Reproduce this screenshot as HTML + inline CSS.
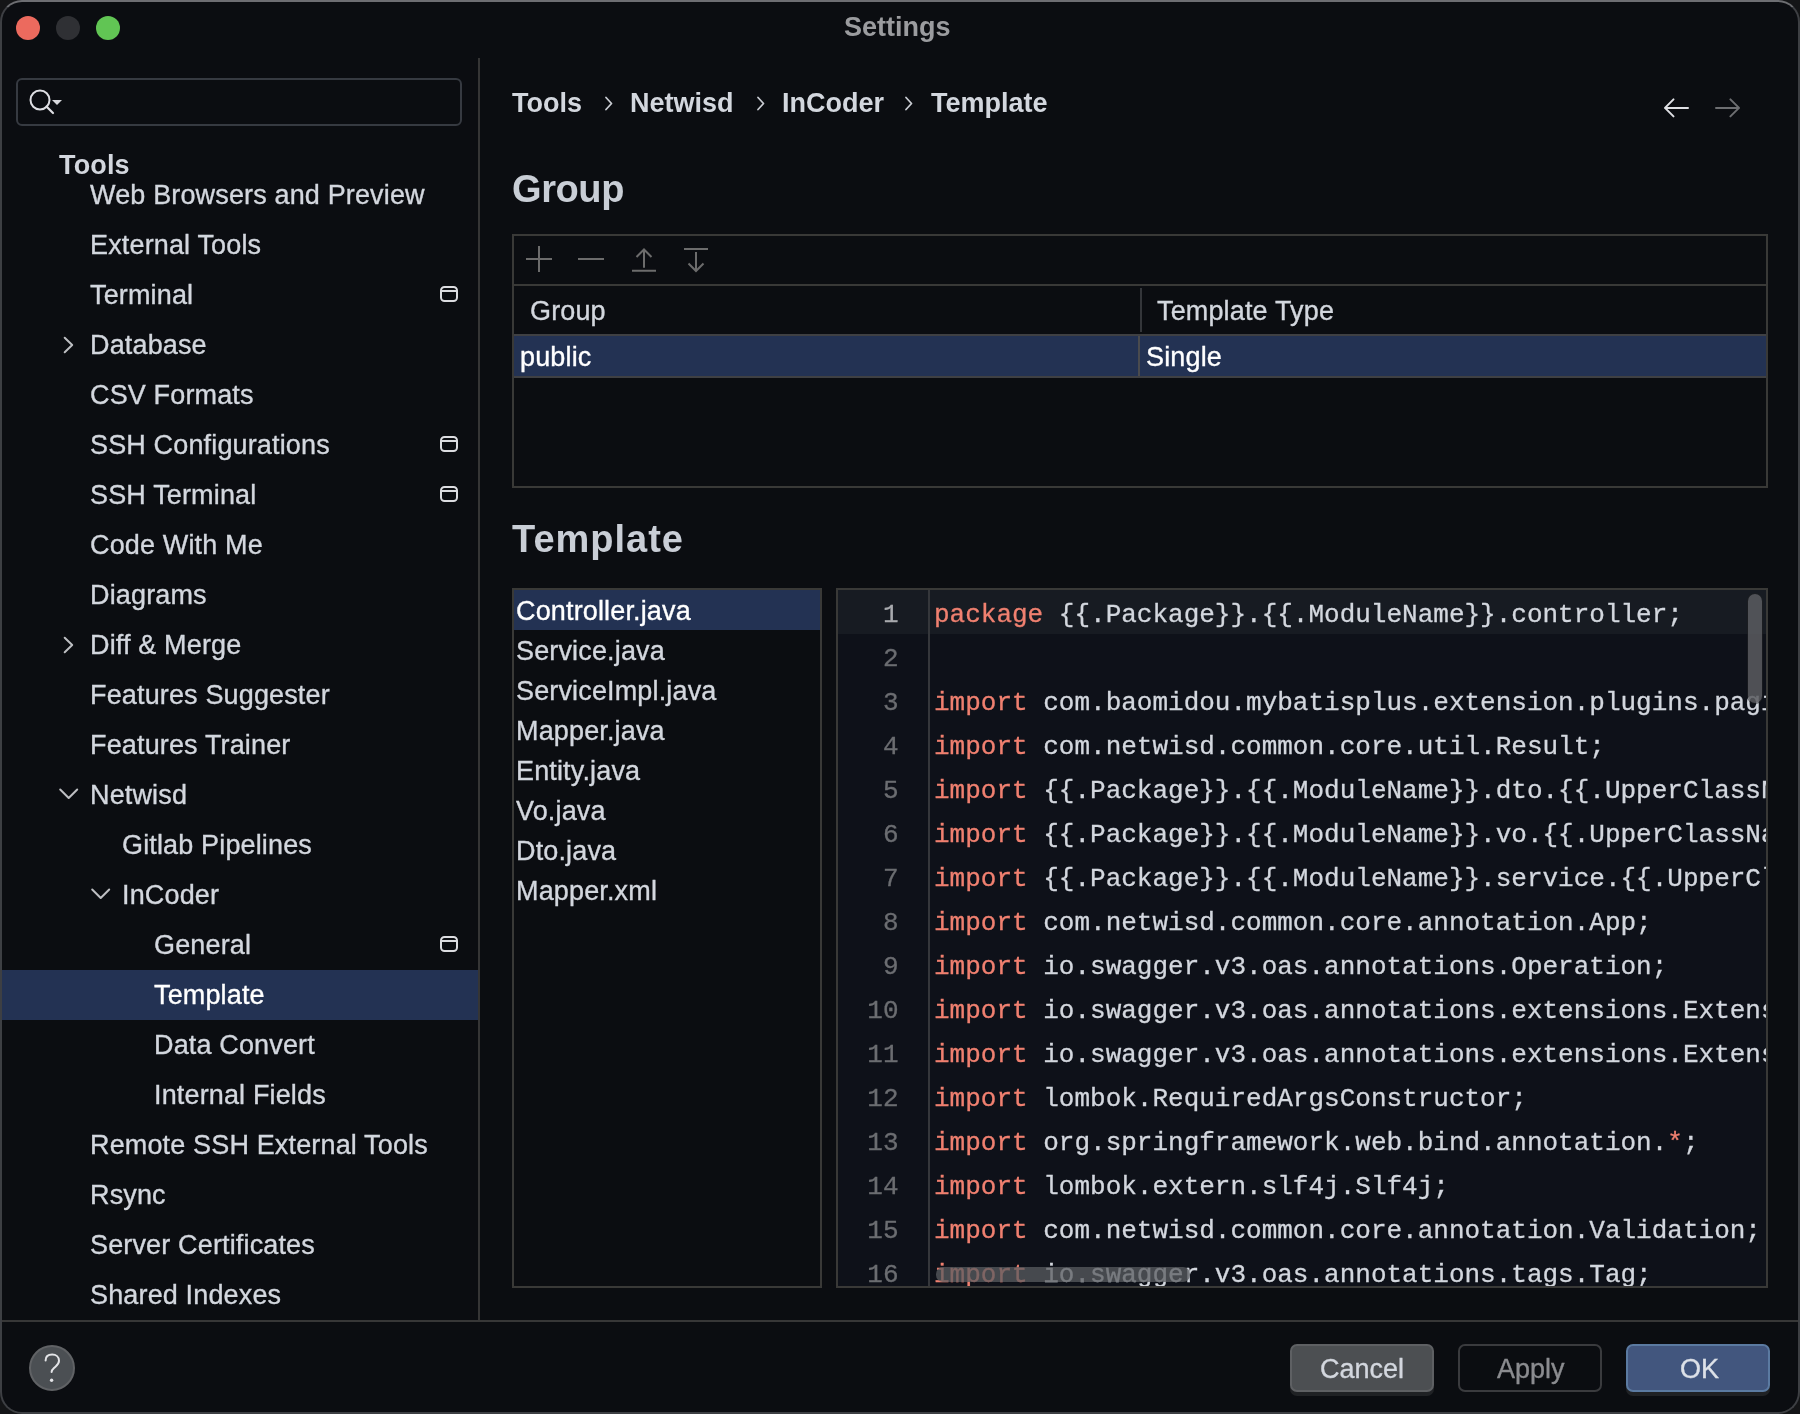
<!DOCTYPE html>
<html><head><meta charset="utf-8"><title>Settings</title>
<style>
html,body{margin:0;padding:0;width:1800px;height:1414px;overflow:hidden;background:#141517;}
.win{position:absolute;left:0;top:0;width:1800px;height:1414px;box-sizing:border-box;border-radius:22px;background:#0b0d11;border:2px solid #3d3f43;border-top-color:#6d6e72;overflow:hidden;}
.s{position:absolute;white-space:nowrap;will-change:transform;font-family:"Liberation Sans",sans-serif;letter-spacing:0.15px;}
.m{position:absolute;white-space:pre;will-change:transform;-webkit-text-stroke:0.3px currentColor;font-family:"Liberation Mono",monospace;font-size:26px;line-height:44px;}
.kw{color:#f08070;}
svg{position:absolute;overflow:visible;}
</style></head><body>
<div class="win"></div>

<div style="position:absolute;left:16px;top:16px;width:24px;height:24px;border-radius:50%;background:#ec6a5e;"></div>
<div style="position:absolute;left:56px;top:16px;width:24px;height:24px;border-radius:50%;background:#2f3034;"></div>
<div style="position:absolute;left:96px;top:16px;width:24px;height:24px;border-radius:50%;background:#61c554;"></div>
<div class="s" style="left:844px;top:14px;font-size:27px;line-height:27px;color:#9b9c9f;font-weight:bold;letter-spacing:0;">Settings</div>
<div style="position:absolute;left:478px;top:58px;width:2px;height:1263px;background:#353535;"></div>
<div style="position:absolute;left:2px;top:1320px;width:1796px;height:2px;background:#373737;"></div>
<div style="position:absolute;left:16px;top:78px;width:446px;height:48px;box-sizing:border-box;border:2px solid #363a41;border-radius:6px;"></div>
<svg style="left:0;top:0" width="1" height="1"><circle cx="40" cy="100" r="9.5" fill="none" stroke="#dedfe3" stroke-width="2"/><path d="M46.5 106.5 L53 113" stroke="#dedfe3" stroke-width="2.2" stroke-linecap="round"/><path d="M52 100 L62 100 L57 105 Z" fill="#d8d9dd"/></svg>
<div style="position:absolute;left:2px;top:970px;width:476px;height:50px;background:#233253;"></div>
<div class="s" style="left:59px;top:152px;font-size:27px;line-height:27px;color:#d3d7de;font-weight:bold;">Tools</div>
<div class="s" style="left:90px;top:182px;font-size:27px;line-height:27px;color:#d3d7de;-webkit-text-stroke:0.35px #d3d7de;">Web Browsers and Preview</div>
<div class="s" style="left:90px;top:232px;font-size:27px;line-height:27px;color:#d3d7de;-webkit-text-stroke:0.35px #d3d7de;">External Tools</div>
<div class="s" style="left:90px;top:282px;font-size:27px;line-height:27px;color:#d3d7de;-webkit-text-stroke:0.35px #d3d7de;">Terminal</div>
<svg style="left:0;top:0" width="1" height="1"><rect x="441" y="287" width="16" height="14" rx="3.5" fill="none" stroke="#dcdde1" stroke-width="2"/><path d="M441 291 L457 291" stroke="#dcdde1" stroke-width="2"/></svg>
<div class="s" style="left:90px;top:332px;font-size:27px;line-height:27px;color:#d3d7de;-webkit-text-stroke:0.35px #d3d7de;">Database</div>
<svg style="left:0;top:0" width="1" height="1"><path d="M64.7 337.8 L72.2 345 L64.7 352.2" fill="none" stroke="#bdbec2" stroke-width="2" stroke-linecap="round" stroke-linejoin="round"/></svg>
<div class="s" style="left:90px;top:382px;font-size:27px;line-height:27px;color:#d3d7de;-webkit-text-stroke:0.35px #d3d7de;">CSV Formats</div>
<div class="s" style="left:90px;top:432px;font-size:27px;line-height:27px;color:#d3d7de;-webkit-text-stroke:0.35px #d3d7de;">SSH Configurations</div>
<svg style="left:0;top:0" width="1" height="1"><rect x="441" y="437" width="16" height="14" rx="3.5" fill="none" stroke="#dcdde1" stroke-width="2"/><path d="M441 441 L457 441" stroke="#dcdde1" stroke-width="2"/></svg>
<div class="s" style="left:90px;top:482px;font-size:27px;line-height:27px;color:#d3d7de;-webkit-text-stroke:0.35px #d3d7de;">SSH Terminal</div>
<svg style="left:0;top:0" width="1" height="1"><rect x="441" y="487" width="16" height="14" rx="3.5" fill="none" stroke="#dcdde1" stroke-width="2"/><path d="M441 491 L457 491" stroke="#dcdde1" stroke-width="2"/></svg>
<div class="s" style="left:90px;top:532px;font-size:27px;line-height:27px;color:#d3d7de;-webkit-text-stroke:0.35px #d3d7de;">Code With Me</div>
<div class="s" style="left:90px;top:582px;font-size:27px;line-height:27px;color:#d3d7de;-webkit-text-stroke:0.35px #d3d7de;">Diagrams</div>
<div class="s" style="left:90px;top:632px;font-size:27px;line-height:27px;color:#d3d7de;-webkit-text-stroke:0.35px #d3d7de;">Diff &amp; Merge</div>
<svg style="left:0;top:0" width="1" height="1"><path d="M64.7 637.8 L72.2 645 L64.7 652.2" fill="none" stroke="#bdbec2" stroke-width="2" stroke-linecap="round" stroke-linejoin="round"/></svg>
<div class="s" style="left:90px;top:682px;font-size:27px;line-height:27px;color:#d3d7de;-webkit-text-stroke:0.35px #d3d7de;">Features Suggester</div>
<div class="s" style="left:90px;top:732px;font-size:27px;line-height:27px;color:#d3d7de;-webkit-text-stroke:0.35px #d3d7de;">Features Trainer</div>
<div class="s" style="left:90px;top:782px;font-size:27px;line-height:27px;color:#d3d7de;-webkit-text-stroke:0.35px #d3d7de;">Netwisd</div>
<svg style="left:0;top:0" width="1" height="1"><path d="M60.2 789.5 L68.7 798 L77.2 789.5" fill="none" stroke="#bdbec2" stroke-width="2" stroke-linecap="round" stroke-linejoin="round"/></svg>
<div class="s" style="left:122px;top:832px;font-size:27px;line-height:27px;color:#d3d7de;-webkit-text-stroke:0.35px #d3d7de;">Gitlab Pipelines</div>
<div class="s" style="left:122px;top:882px;font-size:27px;line-height:27px;color:#d3d7de;-webkit-text-stroke:0.35px #d3d7de;">InCoder</div>
<svg style="left:0;top:0" width="1" height="1"><path d="M92.2 889.5 L100.7 898 L109.2 889.5" fill="none" stroke="#bdbec2" stroke-width="2" stroke-linecap="round" stroke-linejoin="round"/></svg>
<div class="s" style="left:154px;top:932px;font-size:27px;line-height:27px;color:#d3d7de;-webkit-text-stroke:0.35px #d3d7de;">General</div>
<svg style="left:0;top:0" width="1" height="1"><rect x="441" y="937" width="16" height="14" rx="3.5" fill="none" stroke="#dcdde1" stroke-width="2"/><path d="M441 941 L457 941" stroke="#dcdde1" stroke-width="2"/></svg>
<div class="s" style="left:154px;top:982px;font-size:27px;line-height:27px;color:#ffffff;-webkit-text-stroke:0.35px #ffffff;">Template</div>
<div class="s" style="left:154px;top:1032px;font-size:27px;line-height:27px;color:#d3d7de;-webkit-text-stroke:0.35px #d3d7de;">Data Convert</div>
<div class="s" style="left:154px;top:1082px;font-size:27px;line-height:27px;color:#d3d7de;-webkit-text-stroke:0.35px #d3d7de;">Internal Fields</div>
<div class="s" style="left:90px;top:1132px;font-size:27px;line-height:27px;color:#d3d7de;-webkit-text-stroke:0.35px #d3d7de;">Remote SSH External Tools</div>
<div class="s" style="left:90px;top:1182px;font-size:27px;line-height:27px;color:#d3d7de;-webkit-text-stroke:0.35px #d3d7de;">Rsync</div>
<div class="s" style="left:90px;top:1232px;font-size:27px;line-height:27px;color:#d3d7de;-webkit-text-stroke:0.35px #d3d7de;">Server Certificates</div>
<div class="s" style="left:90px;top:1282px;font-size:27px;line-height:27px;color:#d3d7de;-webkit-text-stroke:0.35px #d3d7de;">Shared Indexes</div>
<div class="s" style="left:512px;top:90px;font-size:27px;line-height:27px;color:#d3d7de;font-weight:bold;letter-spacing:0;">Tools</div>
<div class="s" style="left:630px;top:90px;font-size:27px;line-height:27px;color:#d3d7de;font-weight:bold;letter-spacing:0;">Netwisd</div>
<div class="s" style="left:782px;top:90px;font-size:27px;line-height:27px;color:#d3d7de;font-weight:bold;letter-spacing:0;">InCoder</div>
<div class="s" style="left:931px;top:90px;font-size:27px;line-height:27px;color:#d3d7de;font-weight:bold;letter-spacing:0;">Template</div>
<svg style="left:0;top:0" width="1" height="1"><path d="M606 97.5 L611.5 103.5 L606 109.5" fill="none" stroke="#c9ccd2" stroke-width="1.8" stroke-linecap="round" stroke-linejoin="round"/></svg>
<svg style="left:0;top:0" width="1" height="1"><path d="M758 97.5 L763.5 103.5 L758 109.5" fill="none" stroke="#c9ccd2" stroke-width="1.8" stroke-linecap="round" stroke-linejoin="round"/></svg>
<svg style="left:0;top:0" width="1" height="1"><path d="M906 97.5 L911.5 103.5 L906 109.5" fill="none" stroke="#c9ccd2" stroke-width="1.8" stroke-linecap="round" stroke-linejoin="round"/></svg>
<svg style="left:0;top:0" width="1" height="1"><path d="M1673.5 99.4 L1665 107.9 L1673.5 116.4 M1665 107.9 L1688 107.9" fill="none" stroke="#dfe0e4" stroke-width="2" stroke-linecap="round" stroke-linejoin="round"/><path d="M1730.4 99.4 L1739 107.9 L1730.4 116.4 M1739 107.9 L1716 107.9" fill="none" stroke="#6d6e71" stroke-width="2" stroke-linecap="round" stroke-linejoin="round"/></svg>
<div class="s" style="left:512px;top:170px;font-size:38px;line-height:38px;color:#c9ced6;font-weight:bold;letter-spacing:-0.4px;">Group</div>
<div style="position:absolute;left:512px;top:234px;width:1256px;height:254px;box-sizing:border-box;border:2px solid #393937;"></div>
<div style="position:absolute;left:514px;top:284px;width:1252px;height:2px;background:#393937;"></div>
<svg style="left:0;top:0" width="1" height="1" stroke="#6c6c6c" stroke-width="2" fill="none"><path d="M526 259 L552 259 M539 246 L539 272"/><path d="M578 259 L604 259"/><path d="M632 270.8 L656 270.8 M644 249.5 L644 267.8 M636.5 257 L644 249.5 L651.5 257"/><path d="M684 249 L708 249 M696 252 L696 271 M688.5 263.5 L696 271 L703.5 263.5"/></svg>
<div class="s" style="left:530px;top:298px;font-size:27px;line-height:27px;color:#d3d7de;-webkit-text-stroke:0.35px #d3d7de;">Group</div>
<div style="position:absolute;left:1140px;top:288px;width:2px;height:44px;background:#34363a;"></div>
<div class="s" style="left:1157px;top:298px;font-size:27px;line-height:27px;color:#d3d7de;-webkit-text-stroke:0.35px #d3d7de;">Template Type</div>
<div style="position:absolute;left:514px;top:334px;width:1252px;height:2px;background:#3f4043;"></div>
<div style="position:absolute;left:514px;top:336px;width:1252px;height:40px;background:#233253;"></div>
<div style="position:absolute;left:1138px;top:336px;width:2px;height:40px;background:#4a4b4e;"></div>
<div style="position:absolute;left:514px;top:376px;width:1252px;height:2px;background:#3f4043;"></div>
<div class="s" style="left:520px;top:344px;font-size:27px;line-height:27px;color:#ffffff;-webkit-text-stroke:0.35px #ffffff;">public</div>
<div class="s" style="left:1146px;top:344px;font-size:27px;line-height:27px;color:#ffffff;-webkit-text-stroke:0.35px #ffffff;">Single</div>
<div class="s" style="left:512px;top:520px;font-size:38px;line-height:38px;color:#c9ced6;font-weight:bold;letter-spacing:1px;">Template</div>
<div style="position:absolute;left:512px;top:588px;width:310px;height:700px;box-sizing:border-box;border:2px solid #393937;"></div>
<div style="position:absolute;left:514px;top:590px;width:306px;height:40px;background:#233253;"></div>
<div class="s" style="left:516px;top:598px;font-size:27px;line-height:27px;color:#ffffff;-webkit-text-stroke:0.35px #ffffff;">Controller.java</div>
<div class="s" style="left:516px;top:638px;font-size:27px;line-height:27px;color:#d3d7de;-webkit-text-stroke:0.35px #d3d7de;">Service.java</div>
<div class="s" style="left:516px;top:678px;font-size:27px;line-height:27px;color:#d3d7de;-webkit-text-stroke:0.35px #d3d7de;">ServiceImpl.java</div>
<div class="s" style="left:516px;top:718px;font-size:27px;line-height:27px;color:#d3d7de;-webkit-text-stroke:0.35px #d3d7de;">Mapper.java</div>
<div class="s" style="left:516px;top:758px;font-size:27px;line-height:27px;color:#d3d7de;-webkit-text-stroke:0.35px #d3d7de;">Entity.java</div>
<div class="s" style="left:516px;top:798px;font-size:27px;line-height:27px;color:#d3d7de;-webkit-text-stroke:0.35px #d3d7de;">Vo.java</div>
<div class="s" style="left:516px;top:838px;font-size:27px;line-height:27px;color:#d3d7de;-webkit-text-stroke:0.35px #d3d7de;">Dto.java</div>
<div class="s" style="left:516px;top:878px;font-size:27px;line-height:27px;color:#d3d7de;-webkit-text-stroke:0.35px #d3d7de;">Mapper.xml</div>
<div style="position:absolute;left:836px;top:588px;width:932px;height:700px;box-sizing:border-box;border:2px solid #393937;background:#0e1119;"></div>
<div style="position:absolute;left:838px;top:590px;width:928px;height:696px;overflow:hidden;">
<div style="position:absolute;left:0;top:0;width:928px;height:44px;background:#171b22;"></div>
<div style="position:absolute;left:90px;top:0;width:2px;height:696px;background:#35373b;"></div>
<div class="m" style="left:0;top:3px;width:60.5px;text-align:right;color:#a8aaae;">1</div>
<div class="m" style="left:95.5px;top:3px;color:#d3d7de;"><span class="kw">package</span> {{.Package}}.{{.ModuleName}}.controller;</div>
<div class="m" style="left:0;top:47px;width:60.5px;text-align:right;color:#6b6d71;">2</div>
<div class="m" style="left:0;top:91px;width:60.5px;text-align:right;color:#6b6d71;">3</div>
<div class="m" style="left:95.5px;top:91px;color:#d3d7de;"><span class="kw">import</span> com.baomidou.mybatisplus.extension.plugins.pagination.Page;</div>
<div class="m" style="left:0;top:135px;width:60.5px;text-align:right;color:#6b6d71;">4</div>
<div class="m" style="left:95.5px;top:135px;color:#d3d7de;"><span class="kw">import</span> com.netwisd.common.core.util.Result;</div>
<div class="m" style="left:0;top:179px;width:60.5px;text-align:right;color:#6b6d71;">5</div>
<div class="m" style="left:95.5px;top:179px;color:#d3d7de;"><span class="kw">import</span> {{.Package}}.{{.ModuleName}}.dto.{{.UpperClassName}}Dto;</div>
<div class="m" style="left:0;top:223px;width:60.5px;text-align:right;color:#6b6d71;">6</div>
<div class="m" style="left:95.5px;top:223px;color:#d3d7de;"><span class="kw">import</span> {{.Package}}.{{.ModuleName}}.vo.{{.UpperClassName}}Vo;</div>
<div class="m" style="left:0;top:267px;width:60.5px;text-align:right;color:#6b6d71;">7</div>
<div class="m" style="left:95.5px;top:267px;color:#d3d7de;"><span class="kw">import</span> {{.Package}}.{{.ModuleName}}.service.{{.UpperClassName}}Service;</div>
<div class="m" style="left:0;top:311px;width:60.5px;text-align:right;color:#6b6d71;">8</div>
<div class="m" style="left:95.5px;top:311px;color:#d3d7de;"><span class="kw">import</span> com.netwisd.common.core.annotation.App;</div>
<div class="m" style="left:0;top:355px;width:60.5px;text-align:right;color:#6b6d71;">9</div>
<div class="m" style="left:95.5px;top:355px;color:#d3d7de;"><span class="kw">import</span> io.swagger.v3.oas.annotations.Operation;</div>
<div class="m" style="left:0;top:399px;width:60.5px;text-align:right;color:#6b6d71;">10</div>
<div class="m" style="left:95.5px;top:399px;color:#d3d7de;"><span class="kw">import</span> io.swagger.v3.oas.annotations.extensions.Extension;</div>
<div class="m" style="left:0;top:443px;width:60.5px;text-align:right;color:#6b6d71;">11</div>
<div class="m" style="left:95.5px;top:443px;color:#d3d7de;"><span class="kw">import</span> io.swagger.v3.oas.annotations.extensions.ExtensionProperty;</div>
<div class="m" style="left:0;top:487px;width:60.5px;text-align:right;color:#6b6d71;">12</div>
<div class="m" style="left:95.5px;top:487px;color:#d3d7de;"><span class="kw">import</span> lombok.RequiredArgsConstructor;</div>
<div class="m" style="left:0;top:531px;width:60.5px;text-align:right;color:#6b6d71;">13</div>
<div class="m" style="left:95.5px;top:531px;color:#d3d7de;"><span class="kw">import</span> org.springframework.web.bind.annotation.<span class="kw">*</span>;</div>
<div class="m" style="left:0;top:575px;width:60.5px;text-align:right;color:#6b6d71;">14</div>
<div class="m" style="left:95.5px;top:575px;color:#d3d7de;"><span class="kw">import</span> lombok.extern.slf4j.Slf4j;</div>
<div class="m" style="left:0;top:619px;width:60.5px;text-align:right;color:#6b6d71;">15</div>
<div class="m" style="left:95.5px;top:619px;color:#d3d7de;"><span class="kw">import</span> com.netwisd.common.core.annotation.Validation;</div>
<div class="m" style="left:0;top:663px;width:60.5px;text-align:right;color:#6b6d71;">16</div>
<div class="m" style="left:95.5px;top:663px;color:#d3d7de;"><span class="kw">import</span> io.swagger.v3.oas.annotations.tags.Tag;</div>
<div style="position:absolute;left:910px;top:4px;width:14px;height:109px;border-radius:7px;background:rgba(90,92,96,0.85);box-shadow:0 0 0 1px rgba(30,31,33,0.6);"></div>
<div style="position:absolute;left:98px;top:677px;width:254px;height:15px;border-radius:7px;background:rgba(90,92,96,0.75);"></div>
</div>
<div style="position:absolute;left:29px;top:1345px;width:46px;height:46px;box-sizing:border-box;border-radius:50%;background:#4b4f53;border:2px solid #606265;"></div>
<svg style="left:0;top:0" width="1" height="1"><path d="M45.6 1360.5 C45.6 1356.5 48.5 1354.6 52.2 1354.6 C56 1354.6 59 1357 59 1360.8 C59 1364.5 56.3 1365.8 54 1368 C52.5 1369.4 51.6 1370.5 51.6 1372" fill="none" stroke="#e3e4e7" stroke-width="2" stroke-linecap="round"/><circle cx="51.6" cy="1380.2" r="1.7" fill="#e3e4e7"/></svg>
<div style="position:absolute;left:1290px;top:1344px;width:144px;height:48px;box-sizing:border-box;border-radius:7px;background:#4c4f52;border:2px solid #5e6063;box-shadow:0 4px 0 #1f2124;"></div>
<div style="position:absolute;left:1458px;top:1344px;width:144px;height:48px;box-sizing:border-box;border-radius:7px;background:transparent;border:2px solid #3a3b3e;"></div>
<div style="position:absolute;left:1626px;top:1344px;width:144px;height:48px;box-sizing:border-box;border-radius:7px;background:#42567e;border:2px solid #5b7aa1;box-shadow:0 4px 0 #1f2124;"></div>
<div class="s" style="left:1320px;top:1356px;font-size:27px;line-height:27px;color:#d3d7de;-webkit-text-stroke:0.35px #d3d7de;letter-spacing:0;">Cancel</div>
<div class="s" style="left:1497px;top:1356px;font-size:27px;line-height:27px;color:#8b8c90;-webkit-text-stroke:0.35px #8b8c90;letter-spacing:0;">Apply</div>
<div class="s" style="left:1680px;top:1356px;font-size:27px;line-height:27px;color:#dde1e8;-webkit-text-stroke:0.35px #dde1e8;letter-spacing:0;">OK</div>
</body></html>
